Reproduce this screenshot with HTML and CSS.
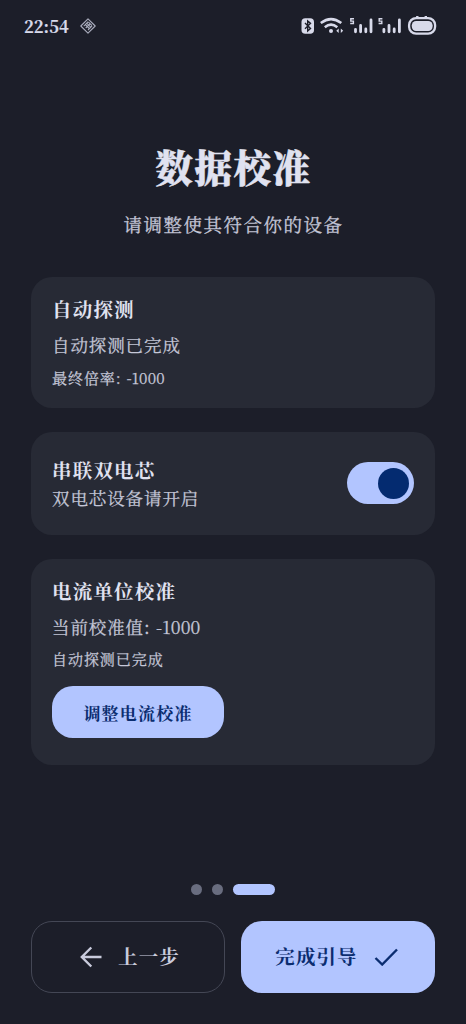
FILE: index.html
```html
<!DOCTYPE html>
<html lang="zh-CN">
<head>
<meta charset="utf-8">
<meta name="viewport" content="width=device-width">
<title>数据校准</title>
<link rel="stylesheet" href="styles.css">
</head>
<body>
<div class="screen">
  <div class="status">
    <span class="clock">22:54</span>
    <svg class="badge-icon" width="16" height="16" viewBox="0 0 16 16" fill="none" stroke="currentColor" stroke-width="1.1" stroke-linejoin="round"><path d="M8 .8 15.2 8 8 15.2.8 8Z"/><path d="M5 6.2 9.8 11M6.4 4.8l4.8 4.8M8.2 3.7l-4.4 4.4M10 5.8 5.7 10M12.1 7.8 8 12M8.5 4.2l3.5 3.4"/></svg>
    <svg class="system-icons" width="140" height="22" viewBox="0 0 140 22" fill="currentColor">
      <rect x="1.5" y="3.2" width="12.5" height="15.5" rx="3.8"/>
      <path d="m5 8 5.5 5.4-2.8 2.5V6l2.8 2.4L5 13.8" fill="none" stroke="#1c1e29" stroke-width="1.4"/>
      <g fill="none" stroke="currentColor" stroke-width="2.5"><path d="M20.8 8.1q10.2-8 20.5 0"/><path d="M24.8 12.2q6.2-5.2 12.5 0"/></g>
      <circle cx="31" cy="16.1" r="2"/>
      <path d="m36.3 15.8 2.4-2.3v4.6zM43.2 15.8l-2.4-2.3v4.6z"/>
      <g id="signal"><path d="M54 3.8h-3.2v2.3h2.6v2.4h-3.2" fill="none" stroke="currentColor" stroke-width="1.4"/><g stroke="currentColor" stroke-width="2.8" stroke-linecap="round"><path d="M55.5 14.3v2.5M60.6 10.5v6.3M65.8 14v2.8M71 5v11.8"/></g></g>
      <use href="#signal" x="28.4"/>
      <path d="M117.3 .9v2M125.8 .9v2" stroke="currentColor" stroke-width="2.4"/>
      <rect x="109.1" y="3.1" width="26" height="15.6" rx="7" fill="none" stroke="currentColor" stroke-width="2.3"/>
      <rect x="111.8" y="6" width="20.8" height="9.9" rx="4.3"/>
    </svg>
  </div>
  <header class="intro">
    <h1>数据校准</h1>
    <p>请调整使其符合你的设备</p>
  </header>
  <main class="cards">
    <section class="card detect">
      <h2>自动探测</h2>
      <p class="body">自动探测已完成</p>
      <p class="small">最终倍率: <span class="num">-1000</span></p>
    </section>
    <section class="card cell">
      <div>
        <h2>串联双电芯</h2>
        <p class="body">双电芯设备请开启</p>
      </div>
      <div class="switch" role="switch" aria-checked="true"><span class="thumb"></span></div>
    </section>
    <section class="card current">
      <h2>电流单位校准</h2>
      <p class="body">当前校准值: <span class="num">-1000</span></p>
      <p class="small">自动探测已完成</p>
      <button class="adjust">调整电流校准</button>
    </section>
  </main>
  <footer class="footer">
    <div class="pager"><i></i><i></i><i class="active"></i></div>
    <div class="actions">
      <button class="nav back">
        <svg width="22" height="22" viewBox="0 0 22 22" fill="none" stroke="currentColor" stroke-width="2.4"><path d="M21.5 11H2.2M11.3 1.5 1.8 11l9.5 9.5"/></svg>
        <span>上一步</span>
      </button>
      <button class="nav done">
        <span>完成引导</span>
        <svg width="24" height="18" viewBox="0 0 24 18" fill="none" stroke="currentColor" stroke-width="2.4"><path d="m1.5 10 6.7 6.5L23 1.5"/></svg>
      </button>
    </div>
  </footer>
</div>
</body>
</html>
```
FILE: styles.css
```css
* { box-sizing: border-box; }
body {
  margin: 0;
  background: #1c1e29;
  color: #e0e2f0;
  font-family: "Noto Serif CJK SC", "Noto Serif SC", "Liberation Serif", "Noto Sans CJK SC", serif;
}
h1, h2, p { margin: 0; white-space: nowrap; }
button { font: inherit; border: 0; padding: 0; white-space: nowrap; }
svg { display: block; flex: none; }
.screen { height: 1024px; display: flex; flex-direction: column; overflow: hidden; }
.status { height: 52px; padding: 0 26px 0 24px; display: flex; align-items: center; color: #d8daea; }
.clock { font-size: 16.5px; line-height: 20px; font-weight: 700; letter-spacing: 0; width: 46px; -webkit-text-stroke: .2px currentColor; }
.badge-icon { margin-left: 10px; color: #aaadbd; }
.system-icons { margin-left: auto; }
.intro { height: 225px; padding-top: 86px; text-align: center; }
.intro h1 { font-size: 37.5px; line-height: 56px; letter-spacing: 1.6px; text-indent: 1px; font-weight: 900; -webkit-text-stroke: .5px currentColor; }
.intro p { margin-top: 16px; font-size: 18.5px; line-height: 28px; letter-spacing: 1.5px; text-indent: 1px; color: #c5c7d8; -webkit-text-stroke: .3px currentColor; }
.cards { padding: 0 31.5px 0 31px; display: flex; flex-direction: column; gap: 24px; }
.card { background: #272a35; border-radius: 21px; padding: 18px 20.5px 0 21px; }
.card h2 { font-size: 19.5px; line-height: 29px; letter-spacing: 1.2px; font-weight: 700; }
.body { font-size: 17.5px; line-height: 26px; letter-spacing: .9px; color: #c5c7d8; -webkit-text-stroke: .25px currentColor; }
.small { font-size: 15px; line-height: 22px; letter-spacing: .95px; color: #c5c7d8; -webkit-text-stroke: .25px currentColor; }
.detect { height: 130.5px; }
.detect .body, .current .body { margin-top: 8px; }
.detect .small, .current .small { margin-top: 8.5px; }
.cell { height: 103px; padding-top: 0; padding-bottom: 0; display: flex; align-items: center; justify-content: space-between; }
.cell .body { margin-top: 0; }
.num { letter-spacing: .2px; }
.switch { width: 67px; height: 42px; padding: 5.5px; border-radius: 21px; background: #b2c5ff; display: flex; justify-content: flex-end; }
.thumb { width: 31px; height: 31px; border-radius: 50%; background: #042b70; }
.current { height: 206px; }
.adjust { display: block; margin-top: 16px; width: 172px; height: 52px; border-radius: 21px; background: #b2c5ff; color: #0b2d70; font-size: 17px; font-weight: 700; letter-spacing: 1.2px; }
.footer { margin-top: auto; padding: 0 31px 31px; }
.pager { display: flex; justify-content: center; gap: 10px; margin-bottom: 26px; }
.pager i { width: 11px; height: 11px; border-radius: 6px; background: #696d7f; }
.pager .active { width: 42px; background: #b2c5ff; }
.actions { display: grid; grid-template-columns: 1fr 1fr; gap: 16px; }
.nav { height: 72px; border-radius: 21px; display: flex; align-items: center; justify-content: center; gap: 16px; font-size: 19.5px; font-weight: 700; letter-spacing: 1.1px; }
.nav span { padding-bottom: 2px; }
.back { background: transparent; border: 1.3px solid #444755; color: #c9cbdc; padding-left: 4px; }
.done { background: #b2c5ff; color: #0b2d70; padding-right: 3px; }
```
